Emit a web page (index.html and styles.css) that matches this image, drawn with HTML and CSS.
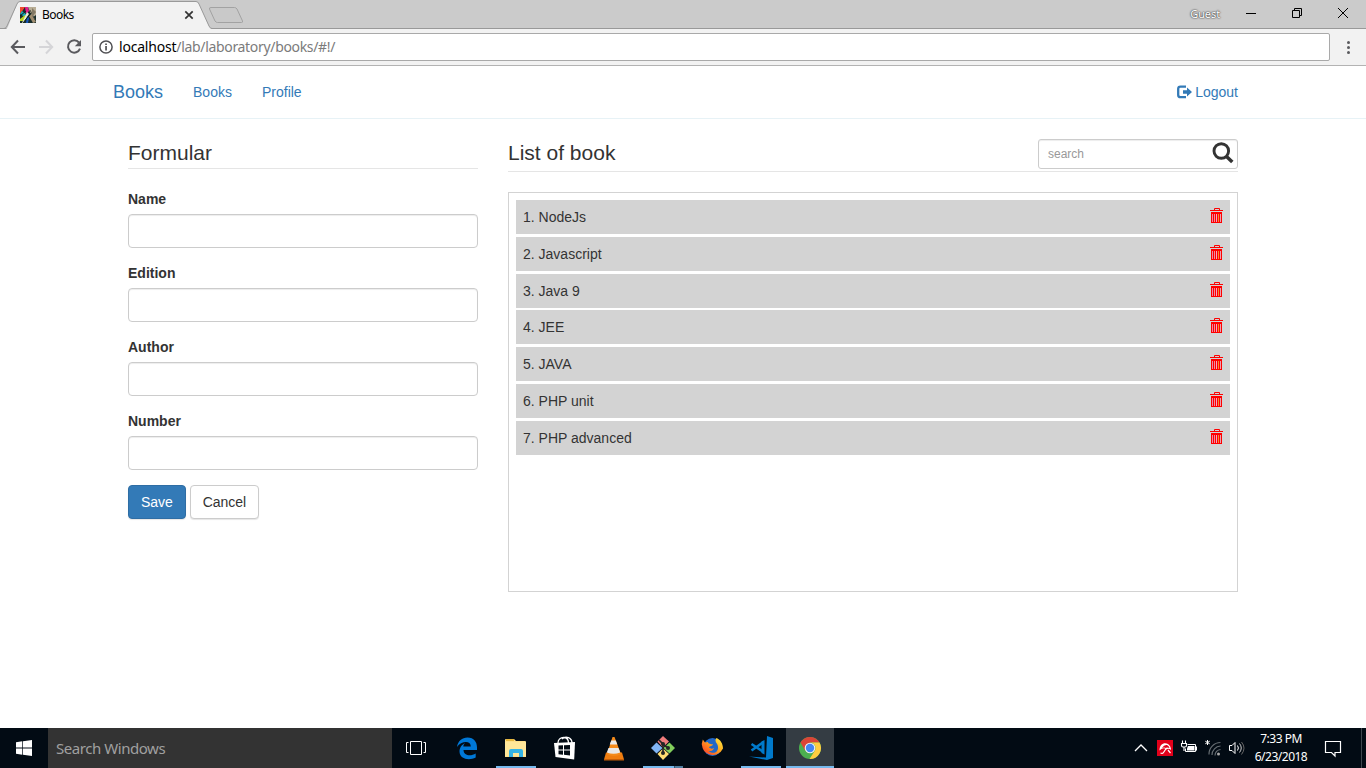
FILE: index.html
```
<!DOCTYPE html>
<html lang="en">
<head>
<meta charset="utf-8">
<title>Books</title>
<link rel="stylesheet" href="styles.css">
</head>
<body>
<svg class="defs" width="0" height="0">
  <symbol id="trash" viewBox="0 0 13 15">
    <path d="M4.500 2V.5h5V2" fill="none" stroke="#f00"/>
    <path d="M0 2h13v1H0z" fill="#f00"/>
    <path d="M1 4h11v11H1z" fill="#f00"/>
    <path d="M2 6h1v8H2z" fill="#e888a8"/><path d="M4 6h1v8H4z" fill="#ec8ca0"/><path d="M6 6h1v8H6z" fill="#f8a0c8"/><path d="M8 6h1v8H8z" fill="#f09030"/><path d="M10 6h1v8h-1z" fill="#e8a0b0"/>
  </symbol>
</svg>

<header class="tabstrip">
  <div class="tab">
    <svg class="tab-shape" width="214" height="29" viewBox="0 0 214 29"><path d="M6 29C8 28 8 26 9 24L17 4Q18 1.500 20 1.500H196Q198 1.500 199 4L208 24Q210 28.500 212 29Z" fill="#f2f2f2"/><path d="M0 28.500H4Q6 28.500 7 26L17 4Q18 1.500 20 1.500H196Q198 1.500 199 4L209 26Q210 28.500 212 28.500H214" fill="none" stroke="#999"/></svg>
    <svg class="favicon" width="16" height="16" viewBox="0 0 16 16"><path d="M0 0h16v16H0z" fill="#172c2b"/><path d="M0 0h5L1 6 0 7z" fill="#f04a30"/><path d="M5 0h3l1 4-3 3z" fill="#e41b8d"/><path d="M8 0h8v8l-4 3-2-6z" fill="#b8ad95"/><path d="M2 4l5 4-2 2-5-3z" fill="#17a9b5"/><path d="M0 12l5-4 2 2-4 4H0z" fill="#b6d41e"/><path d="M7 5l2 2-6 9H2z" fill="#e8ecd8"/><path d="M9 9l3-2 4 8-3 1z" fill="#a08d70"/><path d="M7 9l2 2-1 5H6z" fill="#1657bc"/><path d="M10 3l5 10" stroke="#494c40"/><path d="M12 1l4 4-4 5z" fill="#837965"/><path d="M0 9l6-5M3 16l8-10" stroke="#10201f"/></svg>
    <span class="tab-title">Books</span>
    <svg class="tab-close" width="10" height="10" viewBox="0 0 10 10"><path d="M1.300 1.300l7.400 7.400M8.700 1.300L1.300 8.700" stroke="#333" stroke-width="1.700"/></svg>
  </div>
  <svg class="newtab" width="36" height="18" viewBox="0 0 36 18"><path d="M3 1.500H26.500Q28 1.500 29 3L34.500 15Q35 16.500 33.500 16.500H9.500Q8 16.500 7 15L1.500 3Q1 1.500 3 1.500Z" fill="#c9c9c9" stroke="#a2a2a2"/></svg>
  <span class="guest">Guest</span>
  <svg width="138" height="28" viewBox="0 0 138 28" fill="none" stroke="#000"><path d="M18 13.500h10M64.500 10.500h7v7h-7zM66.500 10.500v-2h7v7h-2M110 8l10 10M120 8l-10 10"/></svg>
</header>

<div class="toolbar">
  <svg width="92" height="36" viewBox="0 0 92 36" fill="none" stroke-width="2"><path d="M25 18H12.500M18 11.500L11.800 18L18 24.500" stroke="#5a5a5e"/><path d="M39 18h12.500M46 11.500l6.200 6.500-6.200 6.500" stroke="#d5d5d8"/><path d="M79 13.500A6.200 6.200 0 1 0 80 19.700" stroke="#5a5a5e"/><path d="M81 11v6.200h-6.200z" fill="#5a5a5e"/></svg>
  <div class="address">
    <svg width="14" height="14" viewBox="0 0 14 14"><circle cx="7" cy="7" r="6.100" fill="none" stroke="#505054" stroke-width="1.500"/><path d="M6.200 6.100h1.700v4.400H6.200zM6.200 3.400h1.700v1.600H6.200z" fill="#505054"/></svg>
    <span class="url"><b>localhost</b>/lab/laboratory/books/#!/</span>
  </div>
  <svg class="menu" width="36" height="36" viewBox="0 0 36 36" fill="#5a5a5e"><circle cx="18.500" cy="13.500" r="1.500"/><circle cx="18.500" cy="18.500" r="1.500"/><circle cx="18.500" cy="23.500" r="1.500"/></svg>
</div>

<nav class="navbar">
  <a class="brand">Books</a><a class="nav-link">Books</a><a class="nav-link">Profile</a>
  <a class="logout"><svg width="15" height="14" viewBox="0 0 15 14"><path d="M9 1.600H3.500Q1.200 1.600 1.200 3.800V10Q1.200 12.200 3.500 12.200H9" fill="none" stroke="#337ab7" stroke-width="2.300"/><path d="M6 5.300h4V2.600L15 7 10 11.400V8.700H6z" fill="#337ab7"/></svg>Logout</a>
</nav>

<main class="content">
  <form class="book-form">
    <h2 class="legend">Formular</h2>
    <div class="group"><label>Name</label><input class="control" type="text"></div>
    <div class="group"><label>Edition</label><input class="control" type="text"></div>
    <div class="group"><label>Author</label><input class="control" type="text"></div>
    <div class="group"><label>Number</label><input class="control" type="text"></div>
    <div class="actions"><button class="btn btn-primary" type="button">Save</button><button class="btn btn-cancel" type="button">Cancel</button></div>
  </form>
  <section class="books">
    <div class="books-head">
      <h2>List of book</h2>
      <div class="search"><span>search</span><svg width="22" height="22" viewBox="0 0 22 22" fill="none" stroke="#333"><circle cx="9.300" cy="9" r="7.300" stroke-width="2.900"/><path d="M14.500 14.500l5.800 5.500" stroke-width="3.500"/></svg></div>
    </div>
    <div class="list">
      <div class="item">1. NodeJs<svg class="trash"><use href="#trash"/></svg></div>
      <div class="item">2. Javascript<svg class="trash"><use href="#trash"/></svg></div>
      <div class="item">3. Java 9<svg class="trash"><use href="#trash"/></svg></div>
      <div class="item">4. JEE<svg class="trash"><use href="#trash"/></svg></div>
      <div class="item">5. JAVA<svg class="trash"><use href="#trash"/></svg></div>
      <div class="item">6. PHP unit<svg class="trash"><use href="#trash"/></svg></div>
      <div class="item">7. PHP advanced<svg class="trash"><use href="#trash"/></svg></div>
    </div>
  </section>
</main>

<footer class="taskbar">
  <svg class="cell" viewBox="0 0 48 40"><path d="M16 14.200l6.300-.9v6.300H16zM23 13.200l9-1.200v7.600h-9zM16 20.400h6.300v6.300l-6.300-.9zM23 20.400h9V28l-9-1.200z" fill="#fff"/></svg>
  <div class="taskbar-search"><span>Search Windows</span></div>
  <div class="apps">
    <svg class="cell" viewBox="0 0 48 40" fill="none" stroke="#fff"><path d="M18.500 13.500h11v13h-11zM16.500 14.500h-2v10h2M31.500 14.500h2v10h-2"/></svg>
    <svg class="cell" viewBox="0 0 48 40"><path d="M14 19C15 13 19 9.500 24.500 9.500C31 9.500 34 14 34 19.500V22H20.500C20.700 28 28 28.500 32.700 25.500V29.500C26 33 16.500 31 16.500 23.500C16.500 19.500 19 16.500 22 15C20.800 16.300 20.400 17.500 20.300 18.500H27.800C27.800 12 18 13 14 19Z" fill="#0078d7"/></svg>
    <svg class="cell run" viewBox="0 0 48 40"><path d="M13 12q0-1 1-1h8l2 2h9q1 0 1 1v15H13z" fill="#ffe08a"/><path d="M14 11h8v2h-8z" fill="#e7b83e"/><path d="M13 14h21v14H13z" fill="#ffe799"/><path d="M17 29v-6q0-2 2-2h10q2 0 2 2v6h-4v-4h-6v4z" fill="#35b4e5"/></svg>
    <svg class="cell" viewBox="0 0 48 40"><path d="M17 15c0-3.500 2.500-5.500 5.500-5.500s5 2 5 5.500M21 11c4-4 10-1 10 4" fill="none" stroke="#fff" stroke-width="1.300"/><path d="M13 15l21-1-.8 17.500-18.700-2.500z" fill="#fff"/><path d="M17.500 17.500l4.500-.3V21.500h-4.500zM23 17.200l6-.2v4.500h-6zM17.500 22.500H22v4.300l-4.500-.5zM23 22.500h6v5l-6-.7z" fill="#020b14"/></svg>
    <svg class="cell" viewBox="0 0 48 40"><path d="M16 24.500h16l2 7H14z" fill="#ef7d10"/><path d="M22.500 9h2l6.500 17q-7 4-14 0z" fill="#f48b1c"/><path d="M21.200 12.500h4.600l1.500 4h-7.600zM18.500 20h10l1.700 4.500q-6.700 2.500-13.400 0z" fill="#e9e9e9"/><path d="M14 31h20v1.500H14z" fill="#c65e07"/></svg>
    <svg class="cell run split" viewBox="0 0 48 40"><path d="M24 8l6 5.500-6 6-5.500-6z" fill="#f07c7c"/><path d="M17.500 14.500l6 5.500-6 5.500-5.500-5.500z" fill="#80b4f4"/><path d="M30.500 14.500l5.500 5.500-5.500 5.500-6-5.500z" fill="#82cf5c"/><path d="M24 20.500l6 5.500-6 6-5.500-6z" fill="#ffdc72"/><path d="M20 12l4 4v9M24 16l5 4" stroke="#252525" stroke-width="1.700" fill="none"/><circle cx="24" cy="16" r="2" fill="#252525"/><circle cx="29" cy="20" r="2" fill="#252525"/><circle cx="24" cy="25" r="2" fill="#252525"/></svg>
    <svg class="cell" viewBox="0 0 48 40"><defs><linearGradient id="fx" x1="1" y1="0" x2="0" y2="1"><stop stop-color="#fff44f"/><stop offset=".4" stop-color="#ffb020"/><stop offset=".7" stop-color="#ff6b20"/><stop offset="1" stop-color="#f1303f"/></linearGradient></defs><circle cx="24.500" cy="19" r="9" fill="#2268c8"/><path d="M14.800 11l2.200 3 3-.5c0 2 3 2 5 2.500-1 2-4 1.500-4 3 2 1 3 2 5 .5-1 4-5 3-5.500 3 5 4 10 1 9.500-4 0-3-2.500-4-2.500-6.500 0-1 .5-2 1-2.500 4 1.500 6.500 6 6.500 10.500A11 11 0 1 1 14.800 11z" fill="url(#fx)" transform="translate(0 .5)"/></svg>
    <svg class="cell run" viewBox="0 0 48 40"><path d="M30 8l6 2v20l-6 2-18-3.500 17 1z" fill="#007acc"/><path d="M14.500 16l12 8M14.500 22.500L26.500 14" stroke="#007acc" stroke-width="2.500"/><path d="M24.500 13.500l3-1.500v14.500l-3-1.500z" fill="#007acc"/></svg>
    <svg class="cell run active" viewBox="0 0 48 40"><circle cx="24" cy="20" r="11" fill="#4caf50"/><path d="M14.500 14.500A11 11 0 0 1 33.500 14.500H24L19.200 22.700z" fill="#db4437"/><path d="M33.500 14.500A11 11 0 0 1 23.500 31L28.800 22.700A5.500 5.500 0 0 0 24 14.500z" fill="#ffcd40"/><circle cx="24" cy="20" r="5.300" fill="#f1f1f1"/><circle cx="24" cy="20" r="4.200" fill="#4285f4"/></svg>
  </div>
  <svg class="tray" width="116" height="40" viewBox="0 0 116 40" fill="none" stroke="#fff"><path d="M5 23l6-6 6 6" stroke-width="1.300"/><path d="M27 12h16v16H27z" fill="#e2001a" stroke="none"/><path d="M29.500 22.500C29.500 16.500 34 14 38 16Q41 18 41 22Q38.500 20 36.500 21.500Q33.500 18.500 29.500 22.500Z" fill="#fff" stroke="none"/><path d="M32 20q2-3.500 5-3 2 1 2.500 3-3-1-3.500 0-2-1-4 0z" fill="#e2001a" stroke="none"/><path d="M36.500 20l-3 4.500q-1 1.500-3 .5M38 22l2.500 3" stroke-width="1.200"/><path d="M57.500 16.500h8v7h-10v-3M66.500 18.500v4" /><path d="M58 18h6.500v4.500H57v-2z" fill="#fff" stroke="none"/><path d="M51.500 15.500h5v2q0 1.500-1.500 1.500h-2q-1.500 0-1.500-1.500zM52.500 15v-2.500M55.500 15v-2.500M54 19v4" stroke-width="1.100"/><path d="M77.500 12v5M75.300 13.200l4.400 2.600M79.700 13.200l-4.400 2.600"/><path d="M79 26.500A11.500 11.500 0 0 1 90.500 14.500M82 27A9 9 0 0 1 90.500 18M85 27.500A6 6 0 0 1 90.500 21.500" stroke="#666d72" stroke-width="1.200"/><circle cx="88.500" cy="26" r="1.500" fill="#aaa" stroke="none"/><path d="M99.500 17.500h2.500l3-3v11l-3-3h-2.500zM107.500 17.500q1.800 2.500 0 5"/><path d="M109.500 15.500q3.500 4.500 0 9" stroke="#ccc"/><path d="M111.500 14q5 6 0 12.500" stroke="#666"/></svg>
  <div class="clock"><span>7:33 PM</span><span>6/23/2018</span></div>
  <svg class="notice" width="50" height="40" viewBox="0 0 50 40" fill="none" stroke="#fff"><path d="M9.500 13.500h15v11h-5.500v3.500l-3.500-3.500h-6z" stroke-width="1.200"/><path d="M45.500 0v40" stroke="#3e474e"/></svg>
</footer>
</body>
</html>
```

FILE: styles.css
```
* { box-sizing: border-box; }
body { margin: 0; width: 1366px; height: 768px; overflow: hidden; display: flex; flex-direction: column; background: #fff; color: #333; font: 14px/20px "Liberation Sans", Arial, sans-serif; }
h2 { margin: 0; font-size: 21px; font-weight: 400; line-height: 30px; }
svg { flex: none; display: block; }
.defs { display: none; }

.tabstrip { height: 29px; flex: none; display: flex; background: #cbcbcb; border-bottom: 1px solid #999; font-family: "Noto Sans", sans-serif; color: #000; }
.tab { position: relative; width: 208px; height: 29px; display: flex; align-items: center; padding: 1px 14px 0 20px; }
.tab-shape { position: absolute; left: 0; top: 0; }
.favicon, .tab-title, .tab-close { position: relative; }
.tab-title { margin-left: 6px; font-size: 12px; letter-spacing: -.55px; }
.tab-close { margin-left: auto; }
.newtab { margin-top: 6px; }
.guest { margin: 4px 8px 0 auto; font-size: 11px; letter-spacing: -.1px; color: #fff; text-shadow: 0 0 2px #222, 0 0 1px #444; }

.toolbar { height: 37px; flex: none; display: flex; background: #f2f2f2; border-bottom: 1px solid #b3b3b3; }
.address { flex: 1; height: 28px; margin-top: 4px; display: flex; align-items: center; gap: 6px; padding-left: 6px; border: 1px solid #a9a9a9; border-radius: 2px; background: #fff; }
.url { font: 14px/20px "Noto Sans", sans-serif; letter-spacing: -.33px; color: #7b7b7b; }
.url b { font-weight: 400; letter-spacing: -.2px; color: #000; }

.navbar { height: 53px; flex: none; display: flex; align-items: center; padding: 0 128px 0 113px; border-bottom: 1px solid #e7f2f6; color: #337ab7; }
.brand { font-size: 18px; }
.nav-link { margin-left: 30px; }
.logout { margin-left: auto; display: flex; align-items: center; gap: 3px; }

.content { flex: 1; display: flex; align-items: flex-start; gap: 30px; padding: 19px 128px 0; }
.book-form { width: 350px; }
.legend { height: 31px; margin-bottom: 20px; border-bottom: 1px solid #e5e5e5; }
.group { margin-bottom: 15px; }
.group label { display: block; margin-bottom: 5px; font-weight: 700; }
.control { display: block; width: 100%; height: 34px; border: 1px solid #ccc; border-radius: 4px; box-shadow: inset 0 1px 1px rgba(0,0,0,.075); }
.actions { display: flex; gap: 4px; }
.btn { height: 34px; padding: 0 12px; border: 1px solid #ccc; border-radius: 4px; background: #fff; color: #333; font: inherit; box-shadow: 0 1px 1px rgba(0,0,0,.1); }
.btn-primary { background: #337ab7; border-color: #2e6da4; color: #fff; }
.btn-cancel { width: 69px; padding: 0; }
.books { flex: 1; }
.books-head { display: flex; justify-content: space-between; height: 34px; border-bottom: 1px solid #e5e5e5; margin-bottom: 20px; }
.search { width: 200px; height: 30px; margin-top: 1px; display: flex; justify-content: space-between; align-items: center; padding: 0 3px 3px 9px; border: 1px solid #ccc; border-radius: 3px; box-shadow: inset 0 1px 1px rgba(0,0,0,.075); font-size: 12px; color: #999; }
.search span { padding-top: 3px; }
.list { height: 400px; padding: 7px; border: 1px solid #d3d3d3; }
.item { display: flex; justify-content: space-between; padding: 7px; margin-bottom: 2.8px; background: #d3d3d3; }
.trash { width: 13px; height: 15px; margin-top: 1px; }

.taskbar { height: 40px; flex: none; display: flex; background: #020b14; color: #fff; font-family: "Noto Sans", sans-serif; }
.cell { width: 48px; height: 40px; }
.taskbar-search { width: 344px; display: flex; align-items: center; padding-left: 8px; background: #333; color: #a0a0a0; font-size: 15px; letter-spacing: -.45px; }
.apps { display: flex; gap: 1px; }
.apps .cell:first-child { margin-right: 2px; }
.run { background: linear-gradient(#76b9ed, #76b9ed) 4px 38px / 40px 2px no-repeat; }
.split { background: linear-gradient(90deg, #76b9ed 31px, #35536b 31px, #35536b 32px, #507d9f 32px) 4px 38px / 40px 2px no-repeat; }
.active { background: linear-gradient(#76b9ed, #76b9ed) 0 38px / 48px 2px no-repeat #343c43; }
.tray { margin-left: auto; }
.clock { width: 70px; display: flex; flex-direction: column; align-items: center; padding-top: 2px; font-size: 12px; line-height: 18px; letter-spacing: -.5px; }
```
